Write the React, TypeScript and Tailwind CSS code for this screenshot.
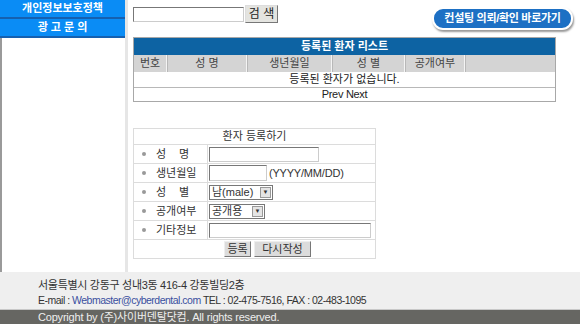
import React from "react"

const font = { fontFamily: '"Liberation Sans", "Noto Sans CJK KR", sans-serif' }

const menus = ["개인정보보호정책", "광 고 문 의"]

const cols = [
  { label: "번호", w: "w-[33px]" },
  { label: "성 명", w: "w-[80px]" },
  { label: "생년월일", w: "w-[85px]" },
  { label: "성 별", w: "w-[73px]" },
  { label: "공개여부", w: "w-[60px]" },
  { label: "", w: "flex-1" },
]

const FormRow = ({ label, children }: { label: string[]; children: React.ReactNode }) => (
  <div className="flex h-[19px] border-t border-[#dcdcdc]">
    <div className="flex w-[74px] items-center border-r border-[#dcdcdc] pl-[8px] text-[11px] text-[#333]">
      <span className="mr-[10px] inline-block h-[4px] w-[4px] rounded-full bg-[#999]" />
      {label.length > 1 ? (
        <span className="flex w-[33px] justify-between">
          {label.map((c) => (
            <span key={c}>{c}</span>
          ))}
        </span>
      ) : (
        <span>{label[0]}</span>
      )}
    </div>
    <div className="flex flex-1 items-center pl-[1px] text-[11px] text-[#333]">{children}</div>
  </div>
)

const Select = ({ value, w }: { value: string; w: string }) => (
  <div className={`flex h-[15px] ${w} items-center justify-between border border-[#777] bg-white pl-[2px] text-[11px]`}>
    <span>{value}</span>
    <span className="mr-[1px] flex h-[11px] w-[11px] items-center justify-center border border-[#999] bg-[#e4e4e4] text-[6px] leading-none">
      ▼
    </span>
  </div>
)

const App = () => {
  return (
    <div className="h-[324px] w-[580px] overflow-hidden bg-white" style={font}>
      <div className="flex h-[272px]">
        <aside className="flex w-[125px] shrink-0 flex-col">
          {menus.map((m, i) => (
            <div
              key={i}
              className="flex h-[19px] items-center justify-center border-b-2 border-[#1560b0] bg-[#0a8cf5] text-[11px] font-bold text-white"
            >
              {m}
            </div>
          ))}
          <div className="flex-1 border-l-2 border-l-[#9a9a9a]" />
        </aside>
        <div className="w-[3px] shrink-0 bg-[#e6e6e6]" />
        <main className="flex-1 pl-[5px]">
          <div className="flex items-start justify-between">
            <div className="mt-[5px] flex items-center">
              <div className="h-[15px] w-[111px] border border-[#777] border-r-[#ccc] border-b-[#ccc] bg-white" />
              <button className="ml-[1px] h-[18px] w-[33px] border border-[#ddd] border-r-[#777] border-b-[#777] bg-[#e4e4e0] text-[12px] leading-none text-[#222]">
                검 색
              </button>
            </div>
            <div className="mr-[7px] mt-[7px] flex h-[23px] w-[141px] items-center justify-center rounded-[11px] border-2 border-white bg-[#1d70c4] text-[11px] font-bold tracking-[-0.3px] text-white shadow-[1px_2px_2px_#999]">
              컨설팅 의뢰/확인 바로가기
            </div>
          </div>

          <div className="mt-[7px] w-[423px] border border-[#a8a8a8] text-[11px]">
            <div className="flex h-[17px] items-center justify-center bg-[#0d63a3] font-bold text-white">
              등록된 환자 리스트
            </div>
            <div className="flex h-[17px] bg-[#d4d4d4] text-[#444]">
              {cols.map((c, i) => (
                <div
                  key={i}
                  className={`${c.w} flex items-center justify-center border-r border-r-[#f4f4f4] border-l border-l-[#b8b8b8] first:border-l-0 last:border-r-0`}
                >
                  {c.label}
                </div>
              ))}
            </div>
            <div className="flex h-[15px] items-center justify-center text-[#222]">등록된 환자가 없습니다.</div>
            <div className="flex h-[14px] items-center justify-center border-t border-[#b8b8b8] tracking-[-0.3px] text-[#222]">
              Prev Next
            </div>
          </div>

          <div className="mt-[26px] w-[243px] border border-[#dcdcdc] border-t-0">
            <div className="flex h-[16px] items-center justify-center border-t border-[#dcdcdc] text-[11px] text-[#333]">
              환자 등록하기
            </div>
            <FormRow label={["성", "명"]}>
              <div className="h-[15px] w-[110px] border border-[#777] border-r-[#ccc] border-b-[#ccc] bg-white" />
            </FormRow>
            <FormRow label={["생년월일"]}>
              <div className="h-[16px] w-[58px] border border-[#777] border-r-[#ccc] border-b-[#ccc] bg-white" />
              <span className="ml-[2px] tracking-[-0.2px]">(YYYY/MM/DD)</span>
            </FormRow>
            <FormRow label={["성", "별"]}>
              <Select value="남(male)" w="w-[64px]" />
            </FormRow>
            <FormRow label={["공개여부"]}>
              <Select value="공개용" w="w-[56px]" />
            </FormRow>
            <FormRow label={["기타정보"]}>
              <div className="h-[15px] w-[162px] border border-[#777] border-r-[#ccc] border-b-[#ccc] bg-white" />
            </FormRow>
            <div className="flex h-[19px] items-center justify-center gap-[3px] border-t border-[#dcdcdc] pl-[26px]">
              <button className="h-[16px] w-[27px] border border-[#eee] border-r-[#777] border-b-[#777] bg-[#dcdcdc] text-[11px] leading-none text-[#333]">
                등록
              </button>
              <button className="h-[16px] w-[57px] border border-[#eee] border-r-[#777] border-b-[#777] bg-[#dcdcdc] text-[11px] leading-none text-[#333]">
                다시작성
              </button>
            </div>
          </div>
        </main>
      </div>

      <footer>
        <div className="h-[38px] border-b border-[#c8c8c8] bg-[#efefef] pl-[38px] pt-[6px] text-[11px] leading-[15px] text-[#333]">
          <div className="tracking-[-0.3px]">서울특별시 강동구 성내3동 416-4 강동빌딩2층</div>
          <div className="text-[10.5px] tracking-[-0.5px]">
            E-mail : <span className="text-[#3a4fa0]">Webmaster@cyberdental.com</span> TEL : 02-475-7516, FAX : 02-483-1095
          </div>
        </div>
        <div className="flex h-[14px] items-center bg-[#666662] pl-[38px] text-[11px] tracking-[-0.2px] text-[#eeeeee]">
          Copyright by (주)사이버덴탈닷컴. All rights reserved.
        </div>
      </footer>
    </div>
  )
}

export default App
